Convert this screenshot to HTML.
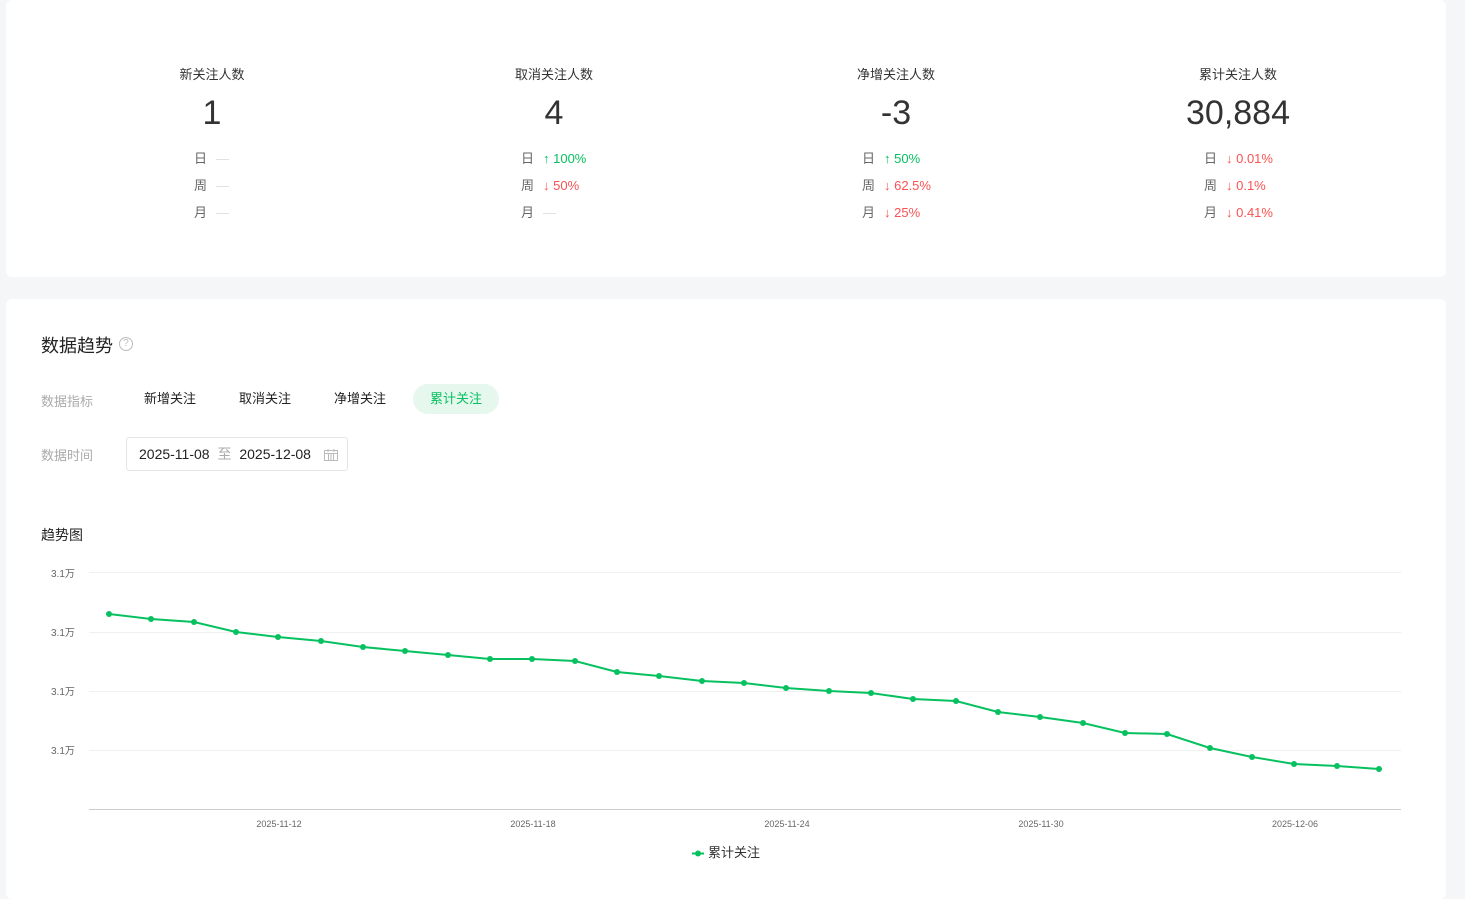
<!DOCTYPE html>
<html><head><meta charset="utf-8"><style>
*{margin:0;padding:0;box-sizing:border-box}
body{width:1465px;height:882px;background:#f5f6f7;font-family:"Liberation Sans","Noto Sans CJK SC",sans-serif;color:#333;position:relative;overflow:hidden}
.card{position:absolute;background:#fff;border-radius:6px;left:6px;width:1440px}
.stat{position:absolute;top:0;width:300px;text-align:center}
.stat .t{position:absolute;top:64px;left:0;width:100%;font-size:13px;color:#333}
.stat .n{position:absolute;top:94px;left:0;width:100%;font-size:34px;color:#333}
.rows{position:absolute;top:150px;font-size:13px;text-align:left}
.rows div{height:27px;line-height:18px}
.rows .k{color:#666;display:inline-block;width:22px}
.g{color:#07c160}.r{color:#fa5151}.d{color:#ddd}
.lab{position:absolute;font-size:13px;color:#aaa}
.tab{position:absolute;top:384px;height:30px;line-height:30px;font-size:13px;color:#222;text-align:center;width:86px;border-radius:15px}
</style></head><body>
<div class="card" style="top:0;height:277px">
 <div class="stat" style="left:56px"><div class="t">新关注人数</div><div class="n">1</div>
  <div class="rows" style="left:132px"><div><span class="k">日</span><span class="d">—</span></div><div><span class="k">周</span><span class="d">—</span></div><div><span class="k">月</span><span class="d">—</span></div></div></div>
 <div class="stat" style="left:398px"><div class="t">取消关注人数</div><div class="n">4</div>
  <div class="rows" style="left:117px"><div><span class="k">日</span><span class="g">↑ 100%</span></div><div><span class="k">周</span><span class="r">↓ 50%</span></div><div><span class="k">月</span><span class="d">—</span></div></div></div>
 <div class="stat" style="left:740px"><div class="t">净增关注人数</div><div class="n">-3</div>
  <div class="rows" style="left:116px"><div><span class="k">日</span><span class="g">↑ 50%</span></div><div><span class="k">周</span><span class="r">↓ 62.5%</span></div><div><span class="k">月</span><span class="r">↓ 25%</span></div></div></div>
 <div class="stat" style="left:1082px"><div class="t">累计关注人数</div><div class="n">30,884</div>
  <div class="rows" style="left:116px"><div><span class="k">日</span><span class="r">↓ 0.01%</span></div><div><span class="k">周</span><span class="r">↓ 0.1%</span></div><div><span class="k">月</span><span class="r">↓ 0.41%</span></div></div></div>
</div>
<div class="card" style="top:299px;height:600px"></div>
<div style="position:absolute;left:41px;top:332px;font-size:18px;color:#222">数据趋势</div>
<div style="position:absolute;left:119px;top:337px;width:14px;height:14px;border:1px solid #bbb;border-radius:50%;font-size:10px;color:#bbb;text-align:center;line-height:12px">?</div>
<div class="lab" style="left:41px;top:391px">数据指标</div>
<div class="tab" style="left:127px">新增关注</div>
<div class="tab" style="left:222px">取消关注</div>
<div class="tab" style="left:317px">净增关注</div>
<div class="tab" style="left:413px;background:#e6f8ed;color:#07c160">累计关注</div>
<div class="lab" style="left:41px;top:445px">数据时间</div>
<div style="position:absolute;left:126px;top:437px;width:222px;height:34px;border:1px solid #e5e5e5;border-radius:3px;font-size:14px;line-height:32px;padding-left:12px;color:#222">2025-11-08 <span style="color:#aaa;margin:0 4px">至</span> 2025-12-08
<svg style="position:absolute;right:9px;top:11px" width="14" height="12" viewBox="0 0 14 12"><rect x="0.5" y="1.5" width="13" height="10" fill="none" stroke="#bbb"/><path d="M1 4.5H13M4 0V3M10 0V3M4.5 5V11M7 5V11M9.5 5V11" stroke="#bbb"/></svg></div>
<div style="position:absolute;left:41px;top:525px;font-size:14px;color:#222">趋势图</div>
<svg style="position:absolute;left:0;top:0" width="1465" height="882">
<g stroke="#f0f0f0"><line x1="89" x2="1401" y1="572.5" y2="572.5"/><line x1="89" x2="1401" y1="632.5" y2="632.5"/><line x1="89" x2="1401" y1="691.5" y2="691.5"/><line x1="89" x2="1401" y1="750.5" y2="750.5"/></g>
<line x1="89" x2="1401" y1="809.5" y2="809.5" stroke="#ccc"/>
<g font-size="10" fill="#666" font-family="Liberation Sans,Noto Sans CJK SC,sans-serif"><text x="51" y="577">3.1万</text><text x="51" y="636">3.1万</text><text x="51" y="695">3.1万</text><text x="51" y="754">3.1万</text>
<g text-anchor="middle" font-size="9"><text x="279" y="827">2025-11-12</text><text x="533" y="827">2025-11-18</text><text x="787" y="827">2025-11-24</text><text x="1041" y="827">2025-11-30</text><text x="1295" y="827">2025-12-06</text></g></g>
<polyline fill="none" stroke="#07c160" stroke-width="2" points="109,614 151,619 194,622 236,632 278,637 321,641 363,647 405,651 448,655 490,659 532,659 575,661 617,672 659,676 702,681 744,683 786,688 829,691 871,693 913,699 956,701 998,712 1040,717 1083,723 1125,733 1167,734 1210,748 1252,757 1294,764 1337,766 1379,769"/>
<g fill="#07c160"><circle cx="109" cy="614" r="3"/><circle cx="151" cy="619" r="3"/><circle cx="194" cy="622" r="3"/><circle cx="236" cy="632" r="3"/><circle cx="278" cy="637" r="3"/><circle cx="321" cy="641" r="3"/><circle cx="363" cy="647" r="3"/><circle cx="405" cy="651" r="3"/><circle cx="448" cy="655" r="3"/><circle cx="490" cy="659" r="3"/><circle cx="532" cy="659" r="3"/><circle cx="575" cy="661" r="3"/><circle cx="617" cy="672" r="3"/><circle cx="659" cy="676" r="3"/><circle cx="702" cy="681" r="3"/><circle cx="744" cy="683" r="3"/><circle cx="786" cy="688" r="3"/><circle cx="829" cy="691" r="3"/><circle cx="871" cy="693" r="3"/><circle cx="913" cy="699" r="3"/><circle cx="956" cy="701" r="3"/><circle cx="998" cy="712" r="3"/><circle cx="1040" cy="717" r="3"/><circle cx="1083" cy="723" r="3"/><circle cx="1125" cy="733" r="3"/><circle cx="1167" cy="734" r="3"/><circle cx="1210" cy="748" r="3"/><circle cx="1252" cy="757" r="3"/><circle cx="1294" cy="764" r="3"/><circle cx="1337" cy="766" r="3"/><circle cx="1379" cy="769" r="3"/>
<line x1="692" x2="704" y1="853.5" y2="853.5" stroke="#07c160" stroke-width="2"/><circle cx="698" cy="853.5" r="3"/></g>
<text x="708" y="857" font-size="13" fill="#333" font-family="Liberation Sans,Noto Sans CJK SC,sans-serif">累计关注</text>
</svg>
</body></html>
